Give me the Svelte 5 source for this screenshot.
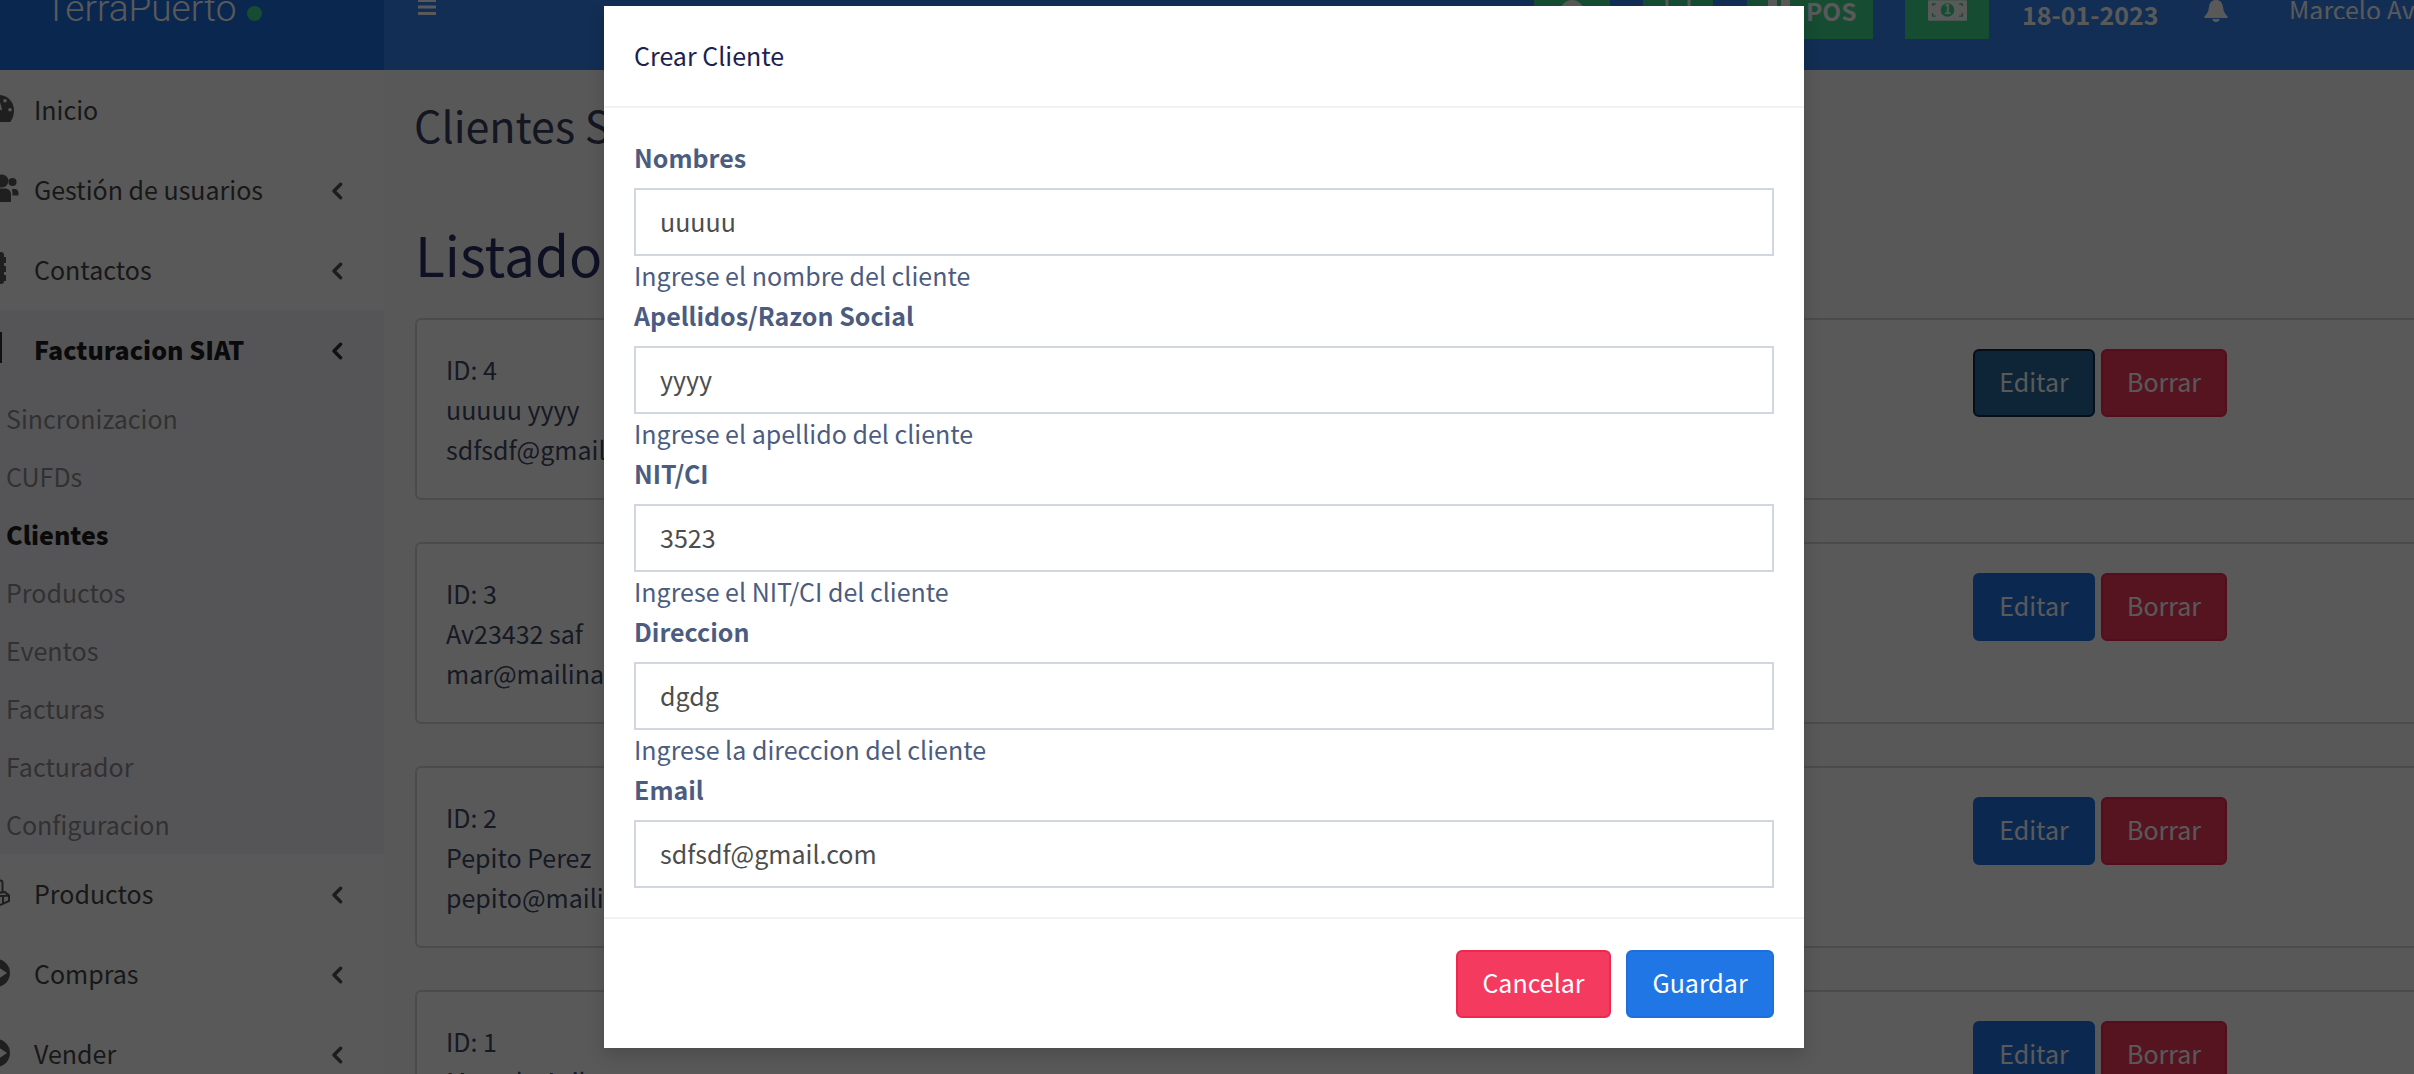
<script>
  const top = ['Sincronizacion', 'CUFDs', 'Clientes', 'Productos', 'Eventos', 'Facturas', 'Facturador', 'Configuracion'];
  const fields = [
    { label: 'Nombres', value: 'uuuuu', hint: 'Ingrese el nombre del cliente' },
    { label: 'Apellidos/Razon Social', value: 'yyyy', hint: 'Ingrese el apellido del cliente' },
    { label: 'NIT/CI', value: '3523', hint: 'Ingrese el NIT/CI del cliente' },
    { label: 'Direccion', value: 'dgdg', hint: 'Ingrese la direccion del cliente' },
    { label: 'Email', value: 'sdfsdf@gmail.com', hint: '' }
  ];
  const clients = [
    { id: 4, name: 'uuuuu yyyy', email: 'sdfsdf@gmail.com', focus: true },
    { id: 3, name: 'Av23432 saf', email: 'mar@mailinator.com' },
    { id: 2, name: 'Pepito Perez', email: 'pepito@mailinator.com' },
    { id: 1, name: 'Marcelo Avila', email: 'marcelo@mailinator.com' }
  ];
</script>

{#snippet chevron()}
  <svg class="chev" viewBox="0 0 12 18" aria-hidden="true"><path d="M9.6 2.200 3 9l6.600 6.800" fill="none" stroke="currentColor" stroke-width="3.400" stroke-linecap="round" stroke-linejoin="round"/></svg>
{/snippet}

<div class="page">
  <header class="topbar">
    <div class="brand">
      <span class="logo">TerraPuerto</span>
      <span class="dot"></span>
    </div>
    <svg class="burger" viewBox="0 0 18 20" aria-hidden="true">
      <path d="M0 1h18v3H0zM0 7.500h18v3H0zM0 14h18v3H0z" fill="currentColor"/>
    </svg>
    <div class="spacer"></div>
    <div class="tools">
      <div class="tool t1">
        <svg viewBox="0 0 30 8" aria-hidden="true"><path d="M3 8C6 3 10 0 15 0s9 3 12 8z" fill="currentColor"/></svg>
      </div>
      <div class="tool t2">
        <svg viewBox="0 0 26 8" aria-hidden="true"><path d="M2 0v8h22V0" fill="none" stroke="currentColor" stroke-width="3"/></svg>
      </div>
      <div class="tool t3">
        <svg class="bars" viewBox="0 0 26 8" aria-hidden="true"><path d="M0 0h9v6H0zM13 0h9v8h-9z" fill="currentColor"/></svg>
        <span class="pos">POS</span>
      </div>
      <div class="tool t4">
        <svg viewBox="0 0 40 21" aria-hidden="true">
          <path fill-rule="evenodd" fill="currentColor" d="M1 0h38a1 1 0 0 1 1 1v19a1 1 0 0 1-1 1H1a1 1 0 0 1-1-1V1a1 1 0 0 1 1-1zM20 3a7 7 0 1 0 0 14 7 7 0 0 0 0-14zM4 13v4h4v-1.500H5.500V13zM36 13h-1.500v2.500H32V17h4zM4 3v3h1.500V4.500H8V3zM32 3v1.500h2.500V6H36V3z"/>
          <text x="20" y="14.500" text-anchor="middle" class="one">1</text>
        </svg>
      </div>
    </div>
    <div class="date">18-01-2023</div>
    <svg class="bell" viewBox="0 0 24 22" aria-hidden="true">
      <path d="M12 0c4 0 6.500 2.500 7 7 .5 4 1.500 6.500 4.500 9.300.7.700.3 1.700-.7 1.700H1.200c-1 0-1.400-1-.7-1.700C3.500 13.500 4.500 11 5 7c.5-4.500 3-7 7-7zM8.500 19h7c0 1.800-1.500 3-3.500 3s-3.500-1.200-3.500-3z" fill="currentColor"/>
    </svg>
    <div class="user">Marcelo Avila</div>
  </header>

  <div class="layout">
    <aside class="sidebar">
      <div class="item">
        <svg class="ico" viewBox="0 0 30 30" aria-hidden="true">
          <path fill-rule="evenodd" fill="currentColor" d="M-1 0a15 15 0 0 1 15 15c0 4-1 8-3 11-.3.500-.8 1-1.300 1H-5V0zM5 4a1.800 1.800 0 1 0 0 3.600A1.800 1.800 0 0 0 5 4zM10 13a1.800 1.800 0 1 0 0 3.600 1.800 1.800 0 0 0 0-3.600zM-.5 5 .2 15l2 .2z"/>
        </svg>
        <span>Inicio</span>
      </div>
      <div class="item">
        <svg class="ico" viewBox="0 0 30 30" aria-hidden="true">
          <circle cx="2" cy="6" r="6.500" fill="currentColor"/>
          <circle cx="12.500" cy="7" r="4" fill="currentColor"/>
          <path fill="currentColor" d="M-4 27v-9c0-3 2-4.500 5-4.500h4c3 0 6 2 6 6V27z"/>
          <path fill="currentColor" d="M12 14h2.500c2.500 0 4 1.500 4 4v2.500H12.500c0-2.500-.2-4.500-.5-6.500z"/>
        </svg>
        <span>Gestión de usuarios</span>{@render chevron()}
      </div>
      <div class="item">
        <svg class="ico" viewBox="0 0 30 30" aria-hidden="true">
          <path fill="currentColor" d="M-5-3H1C3-3 4-2 4 0v2h2v6H4v3h2v6H4v3h2v6H4c0 2-1 3-3 3h-6z"/>
        </svg>
        <span>Contactos</span>{@render chevron()}
      </div>
      <div class="group">
        <div class="item active">
          <span class="edge"></span>
          <span>Facturacion SIAT</span>{@render chevron()}
        </div>
        {#each top as t}
          <div class="sub" class:on={t === 'Clientes'}>{t}</div>
        {/each}
      </div>
      <div class="item">
        <svg class="ico" viewBox="0 0 30 30" aria-hidden="true">
          <path fill="none" stroke="currentColor" stroke-width="2" d="M0 1.500h.5c1.500 0 2 1 2 2.500v9M-3 14l8-1 4 3.500v5.500l-9 4M-3 17h6l6-.5M3 17v8"/>
        </svg>
        <span>Productos</span>{@render chevron()}
      </div>
      <div class="item">
        <svg class="ico" viewBox="0 0 30 30" aria-hidden="true">
          <path fill-rule="evenodd" fill="currentColor" d="M-4 0a14 14 0 1 1 0 28 14 14 0 0 1 0-28zM-2 8l9 6-9 6z"/>
        </svg>
        <span>Compras</span>{@render chevron()}
      </div>
      <div class="item">
        <svg class="ico" viewBox="0 0 30 30" aria-hidden="true">
          <path fill-rule="evenodd" fill="currentColor" d="M-4 0a14 14 0 1 1 0 28 14 14 0 0 1 0-28zM-2 8l9 6-9 6z"/>
        </svg>
        <span>Vender</span>{@render chevron()}
      </div>
    </aside>

    <main class="content">
      <h2>Clientes SIAT</h2>
      <h1>Listado de Clientes</h1>
      {#each clients as c}
        <section class="card">
          <div class="info">
            <div>ID: {c.id}</div>
            <div>{c.name}</div>
            <div>{c.email}</div>
          </div>
          <div class="actions">
            <button class="btn edit" class:focus={c.focus}>Editar</button>
            <button class="btn del">Borrar</button>
          </div>
        </section>
      {/each}
    </main>
  </div>

  <div class="backdrop"></div>

  <div class="modal">
    <div class="m-head">Crear Cliente</div>
    <div class="m-body">
      {#each fields as f}
        <label class="lbl" for={f.label}>{f.label}</label>
        <input id={f.label} class="inp" value={f.value} readonly />
        {#if f.hint}<div class="hint">{f.hint}</div>{/if}
      {/each}
    </div>
    <div class="m-foot">
      <button class="mbtn cancel">Cancelar</button>
      <button class="mbtn save">Guardar</button>
    </div>
  </div>
</div>

<style>
  :global(body) { margin: 0; background: #fff; }
  .page {
    position: relative;
    width: 2414px;
    height: 1074px;
    overflow: hidden;
    background: #fcfdff;
    font-family: "Noto Sans CJK SC", "Noto Sans", sans-serif;
    font-size: 25px;
    line-height: 37px;
  }
  .topbar {
    display: flex;
    align-items: flex-start;
    height: 70px;
    background: #3484f0;
    color: #fff;
    overflow: hidden;
  }
  .brand {
    flex: none;
    display: flex;
    width: 384px;
    height: 70px;
    background: #1f6fe2;
    padding-left: 45px;
    box-sizing: border-box;
  }
  .logo {
    font-family: Roboto, "Liberation Sans", sans-serif;
    font-weight: 300;
    font-size: 37px;
    line-height: 40px;
    margin-top: -11px;
    color: #fff;
    white-space: nowrap;
  }
  .dot {
    width: 15px;
    height: 15px;
    border-radius: 50%;
    background: #3cd98f;
    margin: 6px 0 0 11px;
  }
  .burger { width: 18px; height: 20px; margin: -2px 0 0 34px; flex: none; }
  .spacer { flex: 1; }
  .tools { display: flex; flex: none; align-items: flex-start; }
  .tool { height: 39px; background: #3cd98f; flex: none; display: flex; overflow: hidden; }
  .t1 { width: 76px; margin-right: 33px; justify-content: center; }
  .t1 svg { width: 30px; height: 8px; }
  .t2 { width: 70px; margin-right: 34px; justify-content: center; }
  .t2 svg { width: 26px; height: 8px; }
  .t3 { width: 126px; margin-right: 32px; padding-left: 21px; box-sizing: border-box; }
  .t3 .bars { width: 26px; height: 8px; flex: none; }
  .pos { font-weight: 700; font-size: 24.500px; line-height: 22px; margin-left: 12px; }
  .t4 { width: 84px; justify-content: center; }
  .t4 svg { width: 39px; height: 21px; }
  .one { font: 700 13px "Noto Sans CJK SC", sans-serif; fill: currentColor; }
  .date {
    flex: none;
    font-weight: 700;
    font-size: 25px;
    line-height: 28px;
    margin-left: 33px;
    width: 135px;
    white-space: nowrap;
  }
  .bell { flex: none; width: 24px; height: 22px; margin-left: 47px; }
  .user {
    flex: none;
    width: 125px;
    margin-left: 61px;
    overflow: hidden;
    white-space: nowrap;
    line-height: 20px;
    margin-top: -1px;
  }

  .layout { display: flex; height: 1004px; }
  .sidebar { flex: none; width: 384px; background: #fff; color: #474747; }
  .item {
    position: relative;
    display: flex;
    align-items: center;
    height: 80px;
    padding: 0 0 2px 34px;
    box-sizing: border-box;
  }
  .ico { position: absolute; left: 0; top: 25px; width: 30px; height: 30px; overflow: visible; color: #5a5a5a; }
  .chev { position: absolute; left: 331px; top: 32px; width: 12px; height: 18px; color: #555; }
  .group { background: #f4f4f9; }
  .item.active { font-weight: 900; color: #1f1f1f; }
  .item.active .chev { color: #333; }
  .edge { position: absolute; left: 0; top: 22px; width: 2px; height: 31px; background: #333; }
  .sub { height: 58px; line-height: 57px; padding-left: 6px; color: #8e8e8e; }
  .sub.on { font-weight: 900; color: #1f1f1f; }

  .content { flex: 1; min-width: 0; padding-left: 31px; color: #3f4a68; }
  h2, h1 { margin: 0; font-weight: 400; white-space: nowrap; }
  h2 { font-size: 43px; line-height: 60px; margin-top: 24px; margin-left: -1px; color: #3a4060; }
  h1 { font-size: 55px; line-height: 74px; margin-top: 62px; color: #2a2f66; }
  .card {
    display: flex;
    justify-content: space-between;
    align-items: flex-start;
    height: 182px;
    box-sizing: border-box;
    margin: 28px -20px 42px 0;
    padding: 31px 205px 0 29px;
    background: #fff;
    border: 2px solid #d8d8d8;
    border-radius: 6px;
  }
  .card + .card { margin-top: 0; }
  .info div { height: 40px; }
  .actions { display: flex; gap: 6px; margin-top: -2px; }
  .btn {
    font: inherit;
    line-height: 37px;
    height: 68px;
    padding: 0 0 3px;
    border: 2px solid;
    border-radius: 6px;
    color: #fff;
  }
  .edit { width: 122px; background: #2176e6; border-color: #2176e6; }
  .edit.focus { background: #28679f; border-color: #12294a; }
  .del { width: 126px; background: #f53a5f; border-color: #ef2650; }

  .backdrop { position: absolute; inset: 0; background: rgba(0, 0, 0, .65); }
  .modal {
    position: absolute;
    left: 604px;
    top: 6px;
    width: 1200px;
    height: 1042px;
    display: flex;
    flex-direction: column;
    background: #fff;
    box-shadow: 0 8px 16px rgba(0, 0, 0, .15);
  }
  .m-head {
    flex: none;
    height: 102px;
    box-sizing: border-box;
    padding: 31px 30px 0;
    border-bottom: 2px solid #f2f2f3;
    color: #1d2150;
  }
  .m-body { flex: 1; padding: 30px 30px 0; display: flex; flex-direction: column; color: #4c5c80; line-height: 39px; }
  .lbl { font-weight: 700; height: 40px; margin-bottom: 10px; }
  .inp {
    flex: none;
    height: 68px;
    box-sizing: border-box;
    padding: 0 24px 3px;
    border: 2px solid #d2d6e0;
    border-radius: 0;
    outline: none;
    font: inherit;
    color: #4d4d4d;
    background: #fff;
  }
  .hint { height: 40px; }
  .m-foot {
    flex: none;
    height: 131px;
    box-sizing: border-box;
    border-top: 2px solid #f2f2f3;
    padding: 31px 30px 0;
    display: flex;
    justify-content: flex-end;
    align-items: flex-start;
    gap: 15px;
  }
  .mbtn {
    font: inherit;
    line-height: 37px;
    height: 68px;
    padding: 0 0 3px;
    border: 2px solid;
    border-radius: 6px;
    color: #fff;
  }
  .cancel { width: 155px; background: #f53a5f; border-color: #ef2650; }
  .save { width: 148px; background: #2176e6; border-color: #1f6fd8; }
</style>
